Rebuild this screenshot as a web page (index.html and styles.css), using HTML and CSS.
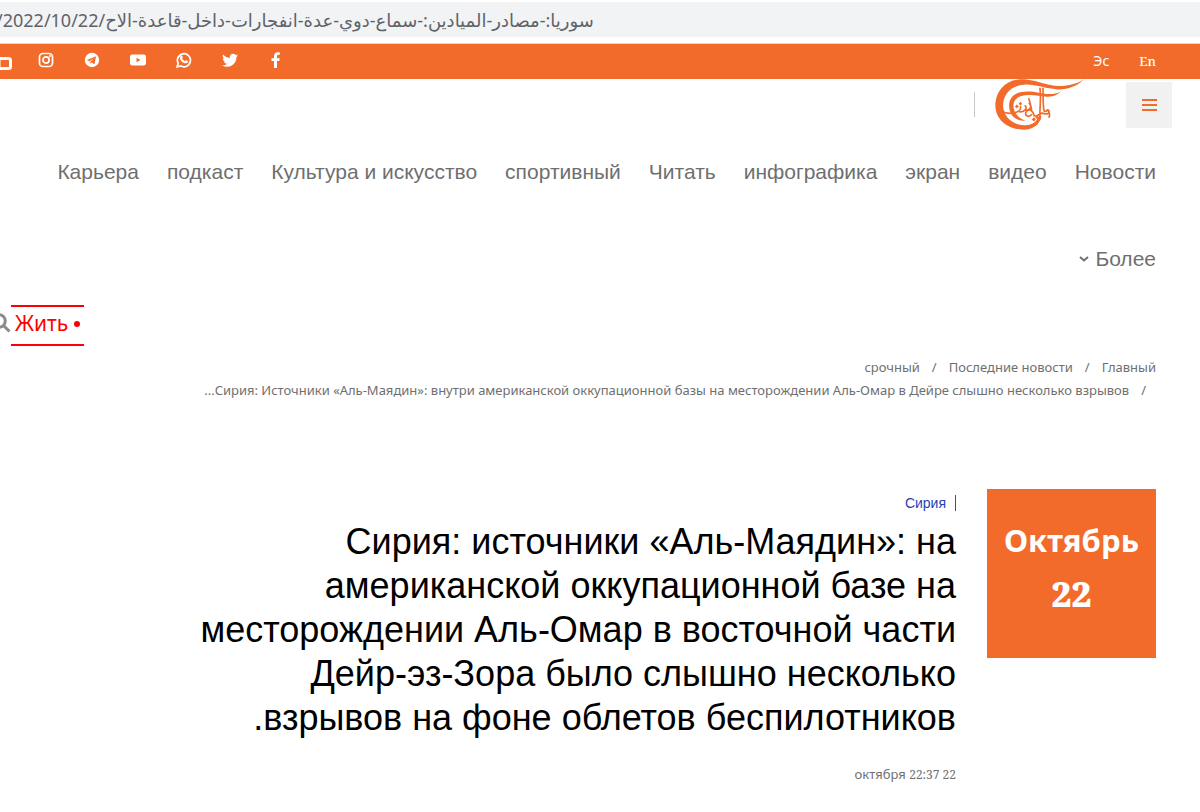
FILE: index.html
```html
<!DOCTYPE html>
<html lang="ru" dir="rtl">
<head>
<meta charset="utf-8">
<meta name="viewport" content="width=device-width, initial-scale=1">
<title>Сирия: источники «Аль-Маядин»</title>
<link rel="stylesheet" href="styles.css">
</head>
<body>
<div class="address"><input class="address-field" dir="ltr" type="text" aria-label="URL" value="/2022/10/22/سوريا:-مصادر-الميادين:-سماع-دوي-عدة-انفجارات-داخل-قاعدة-الاح"></div>
<header>
  <div class="topbar">
    <div class="languages"><a class="latin" href="#">En</a><a href="#">Эс</a></div>
    <div class="social">
      <a href="#" aria-label="Facebook"><svg viewBox="0 0 16 16"><path d="M6 16V9H3.500V6.200H6V4.200C6 1.600 7.500.2 9.800.2c1 0 2 .2 2 .2v2.400h-1.200C9.400 2.800 9 3.500 9 4.300v1.900h2.700L11.300 9H9v7z"/></svg></a>
      <a href="#" aria-label="Twitter"><svg viewBox="0 0 16 16"><path d="M16 3.500c-.6.300-1.200.4-1.800.5.700-.4 1.100-1 1.400-1.800-.6.400-1.300.6-2 .8A3.200 3.200 0 0 0 8 5.900 9.300 9.300 0 0 1 1.200 2.500a3.300 3.300 0 0 0 1 4.300L.8 6.400c0 1.600 1.100 2.900 2.600 3.200-.5.100-1 .1-1.500 0 .4 1.300 1.600 2.200 3 2.300A6.600 6.600 0 0 1 0 13.200 9.300 9.300 0 0 0 14.400 5c.6-.4 1.200-.9 1.600-1.500z"/></svg></a>
      <a href="#" aria-label="WhatsApp"><svg viewBox="1 1 14 14"><path class="line" d="M2 14l.9-3.100A5.700 5.700 0 1 1 5 13.100z"/><path d="M5.600 4.200c.5-.2.700 0 .9.400l.5 1.200-.6.900c.5 1 1.300 1.700 2.500 2.300l.8-.9 1.700.8c.2.800-.2 1.800-1.700 2C7 11 4.300 8 4.400 6c0-.8.600-1.500 1.200-1.800z"/></svg></a>
      <a href="#" aria-label="YouTube"><svg viewBox="0 0 16 16"><path fill-rule="evenodd" d="M2.500 2.500h11C15.300 2.500 16 3.500 16 5v6c0 1.600-.8 2.500-2.500 2.500h-11C.8 13.500 0 12.600 0 11V5c0-1.600.8-2.500 2.500-2.500zM6.500 5.700v4.600l4-2.300z"/></svg></a>
      <a href="#" aria-label="Telegram"><svg viewBox="0 0 16 16"><path fill-rule="evenodd" d="M8 .8a7.200 7.200 0 1 0 0 14.400A7.200 7.200 0 0 0 8 .8zM12 4.600l-1.400 6.900c-.1.500-.4.600-.8.400L7.700 10.300l-1 1c-.3.200-.5.100-.6-.2l-.6-2-2-.7c-.5-.2-.5-.5.100-.7l7.700-3.200c.5-.2.800 0 .7.100zM5.700 9l4.600-3.300-3.600 3.800-.1 1z"/></svg></a>
      <a href="#" aria-label="Instagram"><svg viewBox="1 1 14 14"><rect class="line" x="2.300" y="2.300" width="11.400" height="11.400" rx="3"/><circle class="line" cx="8" cy="8" r="2.700"/><circle cx="11.500" cy="4.600" r=".9"/></svg></a>
      <a class="cut" href="#" aria-label="Nabd"><svg viewBox="0 0 16 16"><rect class="thick" x="3" y="4.500" width="11.500" height="10" rx="2"/></svg></a>
    </div>
  </div>
  <div class="brand">
    <button class="menu" type="button" aria-label="Меню"><span></span><span></span><span></span></button>
    <a class="logo" href="#" aria-label="Al Mayadeen"><svg viewBox="105 118 265 152"><path d="M370 119C350 140 320 150 292 149 250 146 222 132 190 135 155 138 129 162 129 197 129 226 153 254 191 256 215 256 229 246 236 228L243 228C240 252 218 269 190 269 142 269 106 238 106 197 106 156 135 120 183 119 218 118 252 136 292 139 320 140 350 133 370 119z"/><path d="M301 155C283 174 254 172 235 168 187 161 162 171 160 195 158 214 173 235 196 242 167 245 145 225 147 193 150 157 192 149 235 159 262 165 285 164 301 155z"/><path class="calligraphy" d="M120 210C146 230 184 217 181 201M179 216C195 217 201 205 195 198M193 211C211 213 215 199 207 191M206 177L214 208M239 146C243 180 237 210 239 237M248 146C249 175 247 195 251 213 258 220 260 205 265 212 270 221 258 225 248 220 237 219 236 230 222 228 219 213 208 205 200 213 188 227 206 234 214 224M263 212Q270 221 266 232"/><path d="M164 200l6-6 6 6-6 5zM175 192l6-6 5 6-5 5zM214 239l7-7 6 7-6 6zM225 233l6-6 5 6-5 6z"/></svg></a>
    <span class="divider"></span>
  </div>
  <nav class="nav">
    <a href="#">Новости</a><a href="#">видео</a><a href="#">экран</a><a href="#">инфографика</a><a href="#">Читать</a><a href="#">спортивный</a><a href="#">Культура и искусство</a><a href="#">подкаст</a><a href="#">Карьера</a>
    <button class="more" type="button">Более<svg viewBox="0 0 10 8"><path d="M1 2L5 5.500 9 2"/></svg></button>
  </nav>
  <div class="tools">
    <a class="live" href="#">Жить <i></i></a>
    <button class="search" type="button" aria-label="Поиск"><svg viewBox="0 0 20 20"><circle cx="8" cy="8" r="6.300"/><path d="M12.500 12.500L18.500 18.500"/></svg></button>
  </div>
</header>
<main>
  <nav class="crumbs" aria-label="Навигация">
    <a href="#">Главный</a><a href="#">Последние новости</a><a href="#">срочный</a>
    <span class="current">Сирия: Источники «Аль-Маядин»: внутри американской оккупационной базы на месторождении Аль-Омар в Дейре слышно несколько взрывов...</span>
  </nav>
  <article class="article">
    <div class="date"><strong>Октябрь</strong><strong class="day">22</strong></div>
    <div class="story">
      <a class="topic" href="#">Сирия</a>
      <h1>Сирия: источники «Аль-Маядин»: на американской оккупационной базе на месторождении Аль-Омар в восточной части Дейр-эз-Зора было слышно несколько взрывов на фоне облетов беспилотников.</h1>
      <time dir="ltr">октября <span>22:37 22</span></time>
    </div>
  </article>
</main>
</body>
</html>
```
FILE: styles.css
```css
* { box-sizing: border-box; }
body {
  margin: 0;
  overflow-x: hidden;
  background: #fff;
  color: #6f6f6f;
  font-family: "Noto Sans", "Open Sans", sans-serif;
}
a { color: inherit; text-decoration: none; }
button { padding: 0; border: 0; background: none; color: inherit; font: inherit; }
svg { display: block; }

.address {
  margin-top: 2px;
  height: 42px;
  border-bottom: 1px solid #d9dadc;
  background: linear-gradient(#f1f3f4 35px, #fff 35px);
}
.address-field {
  display: block;
  width: 100%;
  height: 35px;
  padding: 0;
  border: 0;
  background: none;
  color: #5f6368;
  font: 18px "Noto Sans", "DejaVu Sans", sans-serif;
  text-indent: -4px;
}
.topbar {
  display: flex;
  align-items: flex-start;
  justify-content: space-between;
  height: 35px;
  padding: 8px 44px 0 0;
  background: #f36b2a;
  color: #fff;
  font-size: 14px;
  line-height: 18px;
}
.languages { display: flex; gap: 30px; }
.latin { font-family: "Noto Serif", "DejaVu Serif", serif; font-size: 13px; font-weight: 500; }
.social { display: flex; gap: 30px; margin-left: -4px; }
.social svg { width: 16px; height: 16px; fill: #fff; }
.social .line { fill: none; stroke: #fff; stroke-width: 1.5; }
.social .thick { fill: none; stroke: #fff; stroke-width: 3; }
.social .cut { margin: 2px -4px 0 0; }

.brand { display: flex; align-items: flex-start; padding: 0 28px; height: 70px; }
.menu {
  display: flex;
  flex-direction: column;
  align-items: center;
  justify-content: center;
  gap: 3px;
  width: 46px;
  height: 46px;
  margin-top: 3px;
  background: #f1f1f1;
}
.menu span { width: 15px; height: 2px; background: #f36b2a; }
.logo { margin-right: 42px; }
.logo svg { width: 89px; height: 51px; fill: #f36b2a; }
.logo .calligraphy { fill: none; stroke: #f36b2a; stroke-width: 5; stroke-linecap: round; }
.divider { width: 1px; height: 25px; margin: 13px 20px 0 0; background: #c8c8c8; }

.nav {
  display: flex;
  flex-wrap: wrap;
  column-gap: 28px;
  row-gap: 57px;
  padding: 8px 44px 0;
  font: 21px/30px "Liberation Sans", sans-serif;
}
.more { display: flex; align-items: center; gap: 6px; }
.more svg { width: 10px; height: 8px; fill: none; stroke: #6f6f6f; stroke-width: 2; }
.tools { display: flex; justify-content: flex-end; align-items: center; margin-top: 31px; }
.live {
  display: flex;
  align-items: center;
  justify-content: center;
  flex-direction: row-reverse;
  gap: 6px;
  width: 73px;
  height: 41px;
  padding-bottom: 6px;
  border-top: 2px solid #f00;
  border-bottom: 2px solid #f00;
  color: #f00;
  font-size: 21px;
}
.live i { width: 6px; height: 6px; margin-top: 2px; border-radius: 50%; background: #f00; }
.search { margin: 0 0 6px -9px; }
.search svg { width: 20px; height: 20px; fill: none; stroke: #8b8b8b; stroke-width: 3; }

.crumbs {
  display: flex;
  flex-wrap: wrap;
  padding: 10px 44px 0;
  font-size: 13px;
  line-height: 23px;
}
.crumbs a + a::before { content: "/"; margin: 0 12px; }
.current { flex-basis: 100%; }
.current::before { content: "/"; margin: 0 10px 0 12px; }

.article { display: flex; align-items: flex-start; gap: 31px; padding: 87px 44px 24px; }
.date {
  display: flex;
  flex: 0 0 169px;
  flex-direction: column;
  align-items: center;
  justify-content: center;
  height: 169px;
  padding-bottom: 14px;
  background: #f36b2a;
  color: #fff;
  font-size: 31px;
  line-height: 54px;
}
.day { font-family: "Noto Serif", "DejaVu Serif", serif; font-size: 35px; font-weight: 900; }
.story { display: flex; flex: 0 1 780px; flex-direction: column; align-items: flex-start; }
.topic {
  margin-top: 6px;
  padding-right: 9px;
  border-right: 1px solid #1f4fc4;
  color: #1f3fb4;
  font: 14px/16px "Liberation Sans", sans-serif;
}
h1 {
  margin: 9px 0 0;
  color: #000;
  font: 36px/44px "Liberation Sans", sans-serif;
}
time { margin-top: 24px; font-size: 13px; line-height: 20px; }
time span { font-family: "Noto Serif", "Liberation Serif", serif; font-size: 12px; }
```
